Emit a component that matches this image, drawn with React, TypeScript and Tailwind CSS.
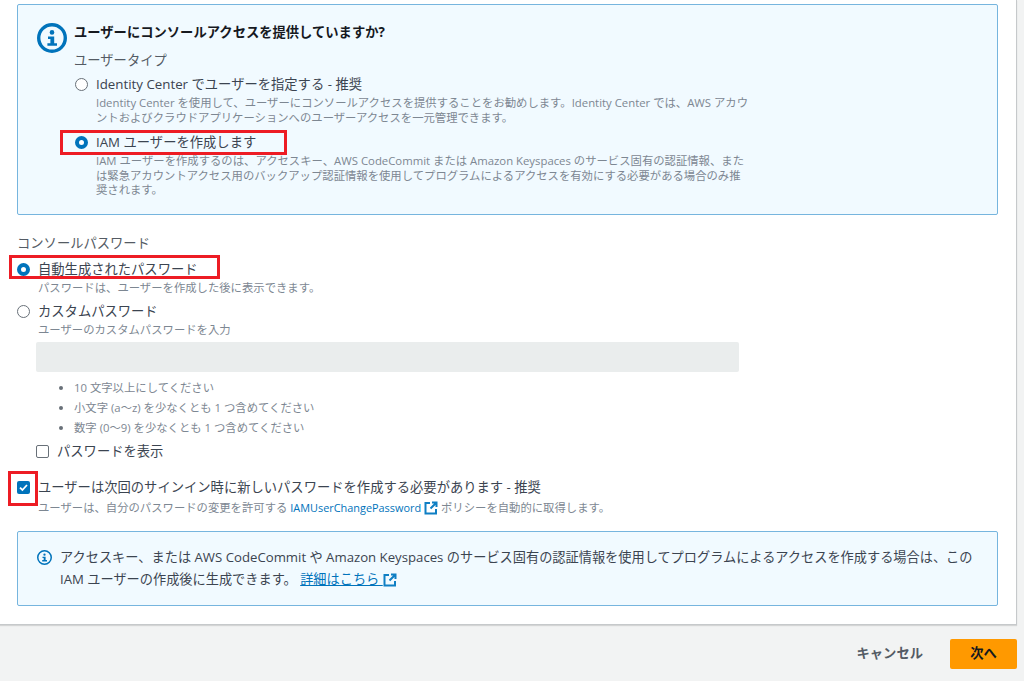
import { ReactNode } from 'react';

const Radio = ({ checked }: { checked?: boolean }) =>
  checked ? (
    <span className="block w-[13px] h-[13px] shrink-0 rounded-full border-[4px] border-[#0073bb] bg-white" />
  ) : (
    <span className="block w-[13px] h-[13px] shrink-0 rounded-full border border-[#687078] bg-white" />
  );

const ExternalIcon = () => (
  <svg viewBox="0 0 14 14" className="inline-block w-[14px] h-[14px] align-[-3px]" fill="none" stroke="#0f7fc4" strokeWidth="2">
    <path d="M6 2H1.5v10.5H12V8" />
    <path d="M8 1.5h4.5V6M12 2 6.5 7.5" />
  </svg>
);

const InfoIcon = ({ size, width }: { size: string; width: number }) => (
  <svg viewBox="0 0 30 30" className={size} fill="none">
    <circle cx="15" cy="15" r={15 - width / 2} stroke="#0073bb" strokeWidth={width} />
    <circle cx="15" cy="9.4" r="2.3" fill="#0073bb" />
    <path d="M11 13.6h6.2v6.6H20v2.6H10.4v-2.6h3V16H11z" fill="#0073bb" />
  </svg>
);

const RadioRow = ({ checked, label, children }: { checked?: boolean; label: string; children?: ReactNode }) => (
  <div className="flex gap-[8px]">
    <div className="pt-[4px]">
      <Radio checked={checked} />
    </div>
    <div className="flex-1">
      <div className="text-[13.3px] leading-[20px] text-[#3b4450]">{label}</div>
      {children}
    </div>
  </div>
);

const Hint = ({ children }: { children: ReactNode }) => (
  <p className="mt-[2px] text-[11.35px] leading-[14.5px] text-[#7d8792]">{children}</p>
);

export default function App() {
  return (
    <div
      className="w-[1024px] h-[681px] overflow-hidden bg-[#f2f3f3] flex flex-col"
      style={{ fontFamily: '"Open Sans", "Noto Sans CJK JP", sans-serif' }}
    >
      <div className="w-[1017px] h-[625px] shrink-0 bg-white border-b border-r border-[#c6c9cb] shadow-[0_1px_1px_rgba(0,0,0,0.12)] pl-[17px] pr-[18px] pt-[4px]">
        <section className="h-[211px] rounded-[2px] border border-[#76b5de] bg-[#f1faff] pl-[19px] pt-[18px] flex gap-[7px]">
          <InfoIcon size="w-[30px] h-[30px] shrink-0" width={3.4} />
          <div className="w-[675px]">
            <h2 className="text-[13.3px] leading-[18px] font-bold text-[#16191f]">ユーザーにコンソールアクセスを提供していますか?</h2>
            <div className="mt-[9px] text-[13.3px] leading-[20px] text-[#545b64]">ユーザータイプ</div>
            <div className="mt-[4px] ml-[1px]">
              <RadioRow label="Identity Center でユーザーを指定する - 推奨">
                <Hint>
                  Identity Center を使用して、ユーザーにコンソールアクセスを提供することをお勧めします。Identity Center では、AWS アカウントおよびクラウドアプリケーションへのユーザーアクセスを一元管理できます。
                </Hint>
              </RadioRow>
            </div>
            <div className="mt-[7px] ml-[1px]">
              <RadioRow checked label="IAM ユーザーを作成します">
                <Hint>
                  IAM ユーザーを作成するのは、アクセスキー、AWS CodeCommit または Amazon Keyspaces のサービス固有の認証情報、または緊急アカウントアクセス用のバックアップ認証情報を使用してプログラムによるアクセスを有効にする必要がある場合のみ推奨されます。
                </Hint>
              </RadioRow>
            </div>
          </div>
        </section>

        <div className="mt-[18px] text-[13.3px] leading-[20px] text-[#545b64]">コンソールパスワード</div>
        <div className="mt-[6px]">
          <RadioRow checked label="自動生成されたパスワード">
            <Hint>パスワードは、ユーザーを作成した後に表示できます。</Hint>
          </RadioRow>
        </div>
        <div className="mt-[5px]">
          <RadioRow label="カスタムパスワード">
            <Hint>ユーザーのカスタムパスワードを入力</Hint>
            <div className="mt-[5px] -ml-[2px] w-[703px] h-[30px] rounded-[2px] bg-[#eaeded]" />
            <ul className="mt-[6px] pl-[36px] list-disc text-[11.35px] leading-[20px] text-[#7d8792] marker:text-[#687078]">
              <li>10 文字以上にしてください</li>
              <li>小文字 (a～z) を少なくとも 1 つ含めてください</li>
              <li>数字 (0～9) を少なくとも 1 つ含めてください</li>
            </ul>
            <div className="mt-[3px] -ml-[2px] flex items-center gap-[8px]">
              <span className="block w-[13px] h-[13px] rounded-[2px] border border-[#687078] bg-white" />
              <span className="text-[13.3px] leading-[20px] text-[#3b4450]">パスワードを表示</span>
            </div>
          </RadioRow>
        </div>

        <div className="mt-[16px] flex gap-[8px]">
          <div className="pt-[4px]">
            <span className="flex items-center justify-center w-[13px] h-[13px] rounded-[2px] bg-[#0073bb]">
              <svg viewBox="0 0 13 13" className="w-[13px] h-[13px]" fill="none" stroke="white" strokeWidth="1.8">
                <path d="M3 6.6 5.4 9 10 4" />
              </svg>
            </span>
          </div>
          <div>
            <div className="text-[13.3px] leading-[20px] text-[#3b4450]">ユーザーは次回のサインイン時に新しいパスワードを作成する必要があります - 推奨</div>
            <p className="mt-[3px] text-[11.35px] leading-[16px] text-[#7d8792]">
              ユーザーは、自分のパスワードの変更を許可する <span className="text-[10.9px] text-[#0073bb]">IAMUserChangePassword</span> <ExternalIcon /> ポリシーを自動的に取得します。
            </p>
          </div>
        </div>

        <section className="mt-[15px] h-[75px] rounded-[2px] border border-[#76b5de] bg-[#f1faff] pl-[19px] pr-[20px] pt-[14px] flex gap-[8px]">
          <InfoIcon size="w-[15px] h-[15px] mt-[4px] shrink-0" width={3} />
          <div className="text-[13.2px] leading-[22px] text-[#3b4450]">
            <div>アクセスキー、または AWS CodeCommit や Amazon Keyspaces のサービス固有の認証情報を使用してプログラムによるアクセスを作成する場合は、この</div>
            <div>
              IAM ユーザーの作成後に生成できます。{' '}
              <span className="text-[#0073bb] underline">詳細はこちら </span><ExternalIcon />
            </div>
          </div>
        </section>
      </div>

      <div className="flex-1 flex items-center justify-end gap-[27px] pr-[7px] pt-[2px]">
        <button className="text-[13.3px] font-bold text-[#545b64]">キャンセル</button>
        <button className="w-[67px] h-[30px] rounded-[2px] bg-[#ff9900] text-[13.3px] font-bold text-[#16191f]">次へ</button>
      </div>

      {/* 赤枠の注釈 */}
      <div className="absolute left-[60px] top-[130px] w-[227px] h-[25px] border-[3px] border-[#ed1c24]" />
      <div className="absolute left-[9px] top-[255px] w-[211px] h-[24px] border-[3px] border-[#ed1c24]" />
      <div className="absolute left-[8px] top-[471px] w-[30px] h-[35px] border-[3px] border-[#ed1c24]" />
    </div>
  );
}
